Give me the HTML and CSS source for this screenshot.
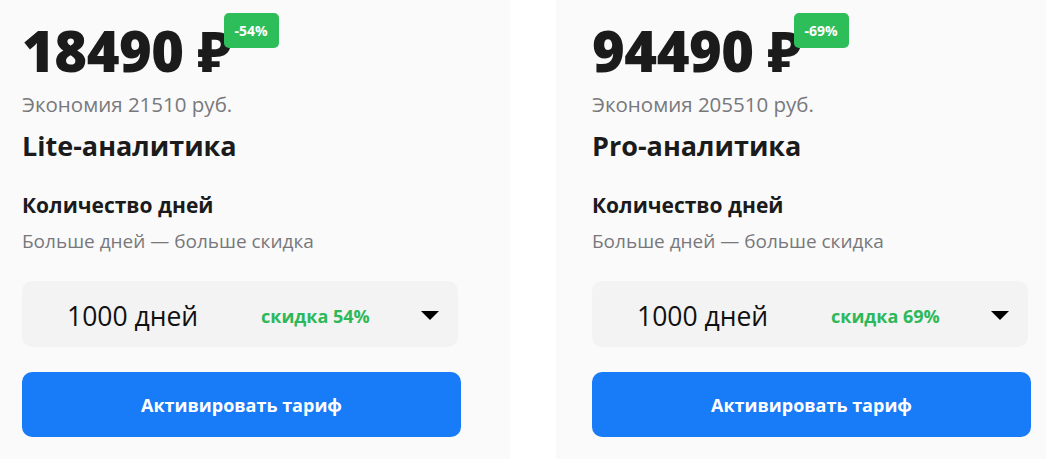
FILE: index.html
```html
<!DOCTYPE html>
<html lang="ru">
<head>
    <meta charset="utf-8">
    <title>Тарифы</title>
    <link rel="stylesheet" href="styles.css">
</head>
<body>
    <div class="plans">
        <div class="plan">
            <div class="price">
                <span class="price-value">18490 ₽</span>
                <span class="badge">-54%</span>
            </div>
            <p class="saving">Экономия 21510 руб.</p>
            <h2 class="plan-name">Lite-аналитика</h2>
            <h3 class="days-title">Количество дней</h3>
            <p class="days-hint">Больше дней — больше скидка</p>
            <div class="select">
                <span class="select-days">1000 дней</span>
                <span class="select-discount">скидка 54%</span>
                <span class="select-arrow"></span>
            </div>
            <button class="activate-btn">Активировать тариф</button>
        </div>
        <div class="plan">
            <div class="price">
                <span class="price-value">94490 ₽</span>
                <span class="badge">-69%</span>
            </div>
            <p class="saving">Экономия 205510 руб.</p>
            <h2 class="plan-name">Pro-аналитика</h2>
            <h3 class="days-title">Количество дней</h3>
            <p class="days-hint">Больше дней — больше скидка</p>
            <div class="select">
                <span class="select-days">1000 дней</span>
                <span class="select-discount">скидка 69%</span>
                <span class="select-arrow"></span>
            </div>
            <button class="activate-btn">Активировать тариф</button>
        </div>
    </div>
</body>
</html>
```

FILE: styles.css
```css
body {
    margin: 0;
    padding: 0;
    background: #ffffff;
    font-family: 'Open Sans', 'Noto Sans', sans-serif;
    color: #1b1b1b;
    overflow: hidden;
}
.plans {
    display: flex;
    gap: 46px;
    margin-left: -14px;
}
.plan {
    flex: 0 0 524px;
    box-sizing: border-box;
    background: #fafafa;
    padding: 22px 49px 30px 36px;
    height: 459px;
}
.price {
    position: relative;
    display: inline-block;
    height: 56px;
}
.price-value {
    font-size: 56px;
    font-weight: 800;
    line-height: 56px;
    letter-spacing: -0.5px;
}
.badge {
    position: absolute;
    top: -9px;
    right: -47px;
    width: 55px;
    height: 35px;
    line-height: 35px;
    text-align: center;
    background: #2dbd59;
    color: #ffffff;
    font-size: 14px;
    font-weight: 700;
    border-radius: 5px;
}
.saving {
    margin: 12px 0 0;
    font-size: 20.5px;
    line-height: 28px;
    color: #78787c;
}
.plan-name {
    margin: 10px 0 0;
    font-size: 27px;
    font-weight: 700;
    line-height: 36px;
}
.days-title {
    margin: 27px 0 0;
    font-size: 21px;
    font-weight: 700;
    line-height: 28px;
}
.days-hint {
    margin: 9px 0 0;
    font-size: 19px;
    line-height: 26px;
    color: #78787c;
}
.select {
    margin-top: 27px;
    width: 436px;
    height: 66px;
    box-sizing: border-box;
    background: #f3f3f3;
    border-radius: 10px;
    display: flex;
    align-items: center;
    padding: 3px 19px 0 45px;
}
.select-days {
    font-size: 26.5px;
    color: #111111;
    width: 194px;
}
.select-discount {
    font-size: 18px;
    font-weight: 700;
    color: #2db85a;
    flex: 1;
}
.select-arrow {
    width: 0;
    height: 0;
    border-left: 9px solid transparent;
    border-right: 9px solid transparent;
    border-top: 9px solid #000000;
}
.activate-btn {
    display: block;
    margin-top: 25px;
    width: 439px;
    height: 65px;
    border: none;
    border-radius: 10px;
    background: #187bf8;
    color: #ffffff;
    font-family: inherit;
    font-size: 18px;
    font-weight: 700;
    cursor: pointer;
}
```
